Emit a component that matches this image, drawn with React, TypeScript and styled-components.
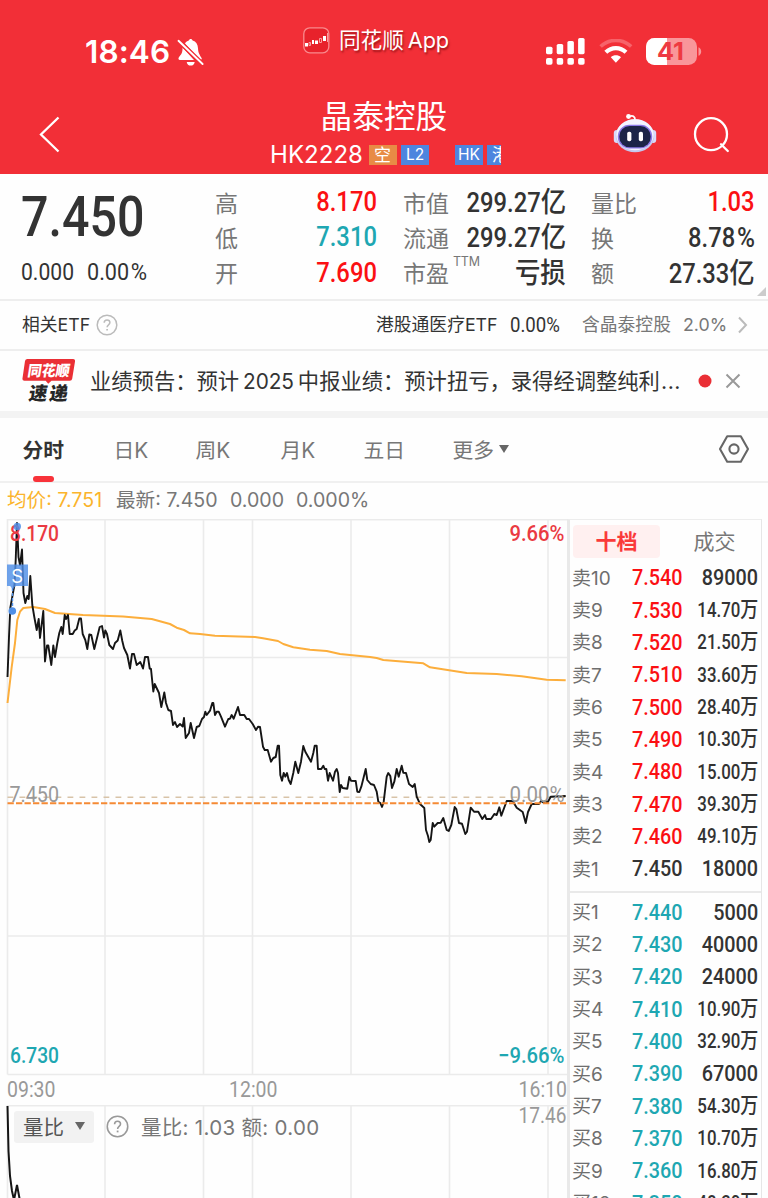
import React from 'react';
import styled, { createGlobalStyle } from 'styled-components';

const LATIN = `Inter, "Noto Sans CJK SC", sans-serif`;
const DIGITS = `Roboto, "Noto Sans CJK SC", sans-serif`;

const RED = '#f22f37';
const UP = '#fb1013';
const DOWN = '#1ea7b2';
const INK = '#333333';
const GREY = '#777777';
const LINE = '#ededed';

const GlobalStyle = createGlobalStyle`
  * { box-sizing: border-box; }
  body { margin: 0; background: #fff; font-family: ${LATIN}; color: ${INK}; }
`;

const Screen = styled.div`
  width: 768px;
  height: 1198px;
  overflow: hidden;
  display: flex;
  flex-direction: column;
  background: #fefefe;
  white-space: nowrap;
`;

/* Condensed figures used for every price and amount. */
const Num = styled.span<{ $size: number; $color?: string; $weight?: number; $from?: string; $scale?: number }>`
  display: inline-block;
  font-family: ${DIGITS};
  font-size: ${p => p.$size}px;
  font-weight: ${p => p.$weight ?? 500};
  color: ${p => p.$color ?? INK};
  line-height: 1;
  transform: scaleX(${p => p.$scale ?? 0.88});
  transform-origin: ${p => p.$from ?? 'right'} center;
`;

const Unit = styled.span`
  font-size: 1.07em;
  font-weight: 500;
`;

const Percent = styled.span`
  font-size: 1.03em;
  margin-left: 0.07em;
`;

/* ---------- header ---------- */

const Header = styled.header`
  height: 174px;
  flex: none;
  background: ${RED};
  color: #fff;
`;

const StatusBar = styled.div`
  height: 88px;
  display: grid;
  grid-template-columns: 303px 243px 53px 47px 1fr;
  align-items: start;
`;

const Clock = styled.div`
  padding: 35px 0 0 85px;
  display: flex;
  align-items: center;
  gap: 7px;
  font-size: 31.5px;
  font-weight: 600;
  line-height: 34px;
  letter-spacing: 0.1px;
`;

const AppChip = styled.div`
  padding-top: 26px;
  display: flex;
  align-items: center;
  gap: 9px;
  font-size: 21.7px;
  line-height: 28px;
  letter-spacing: -0.1px;
  word-spacing: -2px;
  text-shadow: 1px 2px 2px rgba(90, 0, 0, 0.55);
  svg { flex: none; }
`;

const StatusIcon = styled.div<{ $top: number }>`
  padding-top: ${p => p.$top}px;
  svg { display: block; }
`;

const NavBar = styled.div`
  height: 86px;
  display: grid;
  grid-template-columns: 270px 343px 80px 1fr;
`;

const BackButton = styled.div`
  padding: 28px 0 0 38px;
`;

const TitleBlock = styled.div`
  display: flex;
  flex-direction: column;
`;

const StockName = styled.div`
  margin: 11.5px 0 0 50.5px;
  font-size: 31.7px;
  line-height: 34px;
`;

const CodeLine = styled.div`
  margin-top: 11.500px;
  display: flex;
  align-items: center;
  font-size: 24px;
  line-height: 20px;
  height: 20px;
`;

const Code = styled.span`
  width: 99px;
  letter-spacing: 0.05px;
`;

const Tag = styled.span<{ $bg: string; $w: number; $mr?: number }>`
  width: ${p => p.$w}px;
  height: 20px;
  margin-right: ${p => p.$mr ?? 4}px;
  padding-left: 5px;
  overflow: hidden;
  background: ${p => p.$bg};
  font-size: 17px;
  line-height: 20px;
`;

const LatinTag = styled(Tag)`
  padding-left: 0;
  text-align: center;
  font-size: 15.5px;
`;

/* ---------- quote ---------- */

const Quote = styled.section`
  position: relative;
  height: 127px;
  flex: none;
  padding: 11px 13px 0 0;
  display: grid;
  grid-template-columns: 189px 162px 163px 164px;
  column-gap: 26px;
  border-bottom: 2px solid #eeeeee;
  & > :nth-child(4) { margin-left: -1px; margin-right: 1px; }
`;

const Last = styled.div`
  padding: 5px 0 0 21px;
  display: flex;
  flex-direction: column;
`;

const Change = styled.div`
  margin-top: 14.5px;
  display: grid;
  grid-template-columns: 66px 1fr;
`;

const Pair = styled.div`
  height: 35.3px;
  display: flex;
  align-items: center;
  justify-content: space-between;
`;

const PairLabel = styled.span`
  position: relative;
  padding-top: 2px;
  font-size: 23px;
  line-height: 34px;
  color: ${GREY};
`;

const Superscript = styled.sup`
  position: absolute;
  left: 50px;
  top: 0;
  font-size: 12.5px;
  line-height: 14px;
  letter-spacing: -0.2px;
`;

const Corner = styled.i`
  position: absolute;
  right: 2px;
  bottom: 3px;
  border-left: 9px solid transparent;
  border-bottom: 9px solid #cccccc;
`;

/* ---------- ETF + news ---------- */

const EtfRow = styled.section`
  height: 50px;
  flex: none;
  padding-left: 22px;
  display: grid;
  grid-template-columns: 74px 280px 134px 72px 101px 54px 1fr;
  align-items: center;
  font-size: 17.8px;
  line-height: 48px;
  border-bottom: 2px solid #eeeeee;
  svg { display: block; }
`;

const Muted = styled.span`
  color: ${GREY};
`;

const NewsRow = styled.section`
  height: 67px;
  flex: none;
  padding-left: 22px;
  display: grid;
  grid-template-columns: 68px 608px 27px 1fr;
  align-items: center;
  border-bottom: 7px solid #f3f3f3;
  svg { display: block; }
`;

const Headline = styled.span`
  font-size: 21.3px;
  line-height: 30px;
`;

const Year = styled.span`
  margin: 0 4px 0 4px;
  font-size: 20.8px;
  letter-spacing: -0.1px;
`;

const Ellipsis = styled.span`
  margin-left: 1px;
  letter-spacing: 0.6px;
`;

/* ---------- tabs ---------- */

const Tabs = styled.nav`
  height: 65px;
  flex: none;
  padding-left: 22.5px;
  display: grid;
  grid-template-columns: 91px 82px 85px 83px 89px 265px 1fr;
  border-bottom: 2px solid #f0f0f0;
`;

const Tab = styled.span<{ $active?: boolean }>`
  position: relative;
  display: flex;
  align-items: center;
  height: 64px;
  padding-bottom: 1.500px;
  font-size: 20.8px;
  font-weight: ${p => (p.$active ? 700 : 400)};
  color: ${p => (p.$active ? INK : GREY)};
  &::after {
    content: '';
    display: ${p => (p.$active ? 'block' : 'none')};
    position: absolute;
    left: 10px;
    bottom: 0;
    width: 21px;
    height: 6px;
    border-radius: 3px;
    background: #f8333a;
  }
`;

const Caret = styled.i<{ $ml: number }>`
  margin-left: ${p => p.$ml}px;
  border: 5.5px solid transparent;
  border-top: 8px solid #666;
  border-bottom: 0;
`;

const Legend = styled.div`
  height: 36px;
  flex: none;
  padding: 0 0 1px 7px;
  display: grid;
  grid-template-columns: 109px 114px 66px 1fr;
  align-items: center;
  font-size: 19.6px;
  line-height: 35px;
  color: ${GREY};
`;

const Average = styled.span`
  color: #fbb42c;
`;

/* ---------- body ---------- */

const Body = styled.main`
  flex: 1;
  display: grid;
  grid-template-columns: 567px 195px;
  min-height: 0;
`;

const ChartColumn = styled.div`
  display: flex;
  flex-direction: column;
  svg { display: block; flex: none; }
`;

const Indicator = styled.div`
  position: relative;
  height: 94px;
  flex: none;
`;

const IndicatorBar = styled.div`
  position: absolute;
  left: 14px;
  top: 5px;
  height: 33px;
  display: flex;
  align-items: center;
  font-size: 20.5px;
  color: ${GREY};
`;

const IndicatorPick = styled.div`
  width: 80px;
  height: 32px;
  margin-right: 11.5px;
  padding: 0 0 1px 9px;
  display: flex;
  align-items: center;
  border-radius: 3px;
  background: #f2f2f2;
  color: #555;
`;

const IndicatorText = styled.span`
  margin-left: 12.5px;
  padding-bottom: 2px;
  letter-spacing: 0.3px;
`;

const Book = styled.aside`
  height: 720px;
  overflow: hidden;
  border-left: 3px solid #e9e9e9;
  border-right: 1px solid #e6e6e6;
  border-top: 1px solid ${LINE};
`;

const BookTabs = styled.div`
  height: 41.5px;
  padding: 5px 0 0 3px;
  display: grid;
  grid-template-columns: 87px 109px;
`;

const BookTab = styled.span<{ $active?: boolean }>`
  height: 33px;
  padding-bottom: 3px;
  display: flex;
  align-items: center;
  justify-content: center;
  border-radius: 4px;
  font-size: 21px;
  font-weight: ${p => (p.$active ? 700 : 400)};
  color: ${p => (p.$active ? '#fa3a3a' : GREY)};
  background: ${p => (p.$active ? '#fff0f0' : 'transparent')};
`;

const Level = styled.div`
  height: 32.33px;
  padding: 0 3px 0 2px;
  display: grid;
  grid-template-columns: 40px 70px 1fr;
  align-items: center;
  justify-items: end;
`;

const LevelName = styled.span`
  justify-self: start;
  padding-top: 2px;
  font-size: 19px;
  line-height: 30px;
  color: #6e6e6e;
`;

const BookDivider = styled.div`
  height: 2px;
  margin: 6px 0 3px;
  background: #e9e9e9;
`;

/* ---------- icons ---------- */

const BellOff = () => (
  <svg width="27" height="29" viewBox="0 0 27 29" fill="#fff">
    <path d="M8 5.500C9 4 10.400 3 11.800 2.600c.3-1 1-1.600 1.900-1.600s1.600.6 1.900 1.600c3.500 1 5.200 4 5.400 7.600.2 3.600.6 5 3.600 9.800.4.800 0 1.900-1.200 1.900z" />
    <path d="M5.600 9.600 17 21.900H3c-1.600 0-2-1.600-1.100-2.700 2.700-3 3.500-4 3.700-9.600z" />
    <path d="M9.700 23.900h8c-.3 2.400-1.900 3.600-4 3.600s-3.700-1.200-4-3.600z" />
    <path d="M1.500 2.800 25.600 26" stroke={RED} strokeWidth="4.600" />
    <path d="M1.500 2.800 25.600 26" stroke="#fff" strokeWidth="1.900" strokeLinecap="round" />
  </svg>
);

const AppIcon = () => (
  <svg width="27" height="27" viewBox="0 0 27 27">
    <rect x=".8" y=".8" width="25" height="25" rx="6" fill="#e8222b" stroke="#f98a8d" strokeWidth="1.300" />
    <g fill="#fff">
      <rect x="2" y="16" width="3" height="3.500" />
      <rect x="9" y="13" width="2" height="4" />
      <rect x="12" y="13.500" width="3" height="3.500" />
      <rect x="20" y="9" width="3" height="5" />
    </g>
    <path d="M6 15.500h1.500v3H6zM16.500 11.500h2v4h-2zM24.500 6v9" fill="none" stroke="#fbb" strokeWidth=".8" />
  </svg>
);

const Signal = () => (
  <svg width="40" height="28" viewBox="0 0 40 28" fill="#fff">
    {[0, 1, 2, 3].map(i => (
      <g key={i}>
        <rect x={i * 10.700} y={[8.700, 6, 3, 0][i]} width="6.500" height={[7.500, 10.200, 13.200, 16.200][i]} rx="1.600" />
        <rect x={i * 10.700} y="20" width="6.500" height="6.700" rx="1.800" />
      </g>
    ))}
  </svg>
);

const Wifi = () => (
  <svg width="34" height="25" viewBox="0 0 34 25" fill="none">
    <path d="M1.600 7.500C10-.6 23.600-.6 32.200 7.500" stroke="#f7636a" strokeWidth="3.600" />
    <path d="M6.800 13.300c5.800-5.500 14.400-5.500 20.200 0" stroke="#fff" strokeWidth="4.200" />
    <path d="M11.800 18.300c2.900-2.600 7.300-2.600 10.200 0l-5.100 5.500z" fill="#fff" />
  </svg>
);

const Battery = () => (
  <svg width="57" height="28" viewBox="0 0 57 28">
    <clipPath id="cell"><rect x="0" y="0" width="51" height="27" rx="8.500" /></clipPath>
    <g clipPath="url(#cell)">
      <rect width="51" height="27" fill="#f9969a" />
      <rect width="21" height="27" fill="#fff" />
    </g>
    <path d="M52.500 9.200c3.600 1.400 3.600 7.200 0 8.600z" fill="#f9969a" />
    <text x="11" y="22.300" fontFamily="Inter" fontSize="24" fontWeight="700" fill="#ee3a41" textLength="27" lengthAdjust="spacingAndGlyphs">41</text>
  </svg>
);

const Robot = () => (
  <svg width="44" height="42" viewBox="0 0 44 42">
    <path d="M16.500 3.500c3-1.500 5.500-.5 5.700 4" fill="none" stroke="#fff" strokeWidth="1.800" />
    <circle cx="15.500" cy="3.500" r="2.400" fill="#fff" />
    <rect x=".8" y="17" width="6" height="13" rx="3" fill="#d9dbfb" />
    <rect x="37.200" y="17" width="6" height="13" rx="3" fill="#d9dbfb" />
    <ellipse cx="22" cy="23" rx="19.300" ry="16.300" fill="#c4c7ee" />
    <ellipse cx="22" cy="21.700" rx="18.700" ry="15.600" fill="#f4f4ff" />
    <rect x="4.800" y="11.800" width="34.400" height="23.600" rx="11.500" fill="#8b78e6" />
    <rect x="6.300" y="13" width="31.400" height="21.200" rx="10.300" fill="#1c2447" />
    <rect x="14.200" y="18.800" width="4.200" height="9.400" rx="1.800" fill="#fff" />
    <rect x="25.800" y="18.800" width="4.200" height="9.400" rx="1.800" fill="#fff" />
  </svg>
);

const Search = () => (
  <svg width="38" height="38" viewBox="0 0 38 38" fill="none" stroke="#fff" strokeWidth="2.300">
    <circle cx="18" cy="18.200" r="16" />
    <path d="m28 28.200 6.800 6.800" strokeLinecap="round" />
  </svg>
);

const Help = ({ size, color }: { size: number; color: string }) => (
  <svg width={size} height={size} viewBox="0 0 22 22" fill="none" stroke={color} strokeWidth="1.500">
    <circle cx="11" cy="11" r="9.800" />
    <path d="M8.200 8.800c0-3.900 5.700-3.700 5.700-.2 0 2.300-2.800 2.300-2.800 4.700" />
    <path d="M11.100 14.900v1.700" strokeWidth="1.700" />
  </svg>
);

const NewsLogo = () => (
  <svg width="54" height="46" viewBox="0 0 54 46" fontFamily={`"Noto Sans CJK SC", sans-serif`} fontWeight="900">
    <path d="M5.500 1h45.500a2 2 0 0 1 2 2.400l-2.800 17.300a2.500 2.500 0 0 1-2.500 2H29.500l-3.300 3-2.500-3H2.500a2 2 0 0 1-2-2.400L3 3a2.500 2.500 0 0 1 2.500-2z" fill="#ea2f35" />
    <text transform="translate(5 18) skewX(-9)" fontSize="14.800" fill="#fff" textLength="42" lengthAdjust="spacingAndGlyphs">同花顺</text>
    <text transform="translate(6 42) skewX(-9)" fontSize="18.500" fill="#262626" textLength="39">速递</text>
  </svg>
);

const Hexagon = () => (
  <svg width="32" height="30" viewBox="0 0 32 30" fill="none" stroke="#666" strokeWidth="2.100" strokeLinejoin="round">
    <path d="M9.200 2.200h13.600L30 15l-7.200 12.800H9.200L2 15z" />
    <circle cx="16" cy="15" r="4.600" />
  </svg>
);

/* ---------- chart data ---------- */

const PRICE = `7.5,677 9,637 10.3,608 13.5,590 14.5,585 15.7,560 17,523 18.5,557 20,565 22,549.5 23.5,593 25.3,603
27.3,596 28.7,599 30.3,576 32.3,605 34.3,617 36.7,630 38.7,619 40,638 43.3,611 45,661.5 47,645.5 48.3,645.5 51.3,665
53.3,645.5 55,657 57.3,643 59.3,633 61.3,627 62.7,634 64.7,615 66,619 68,615 69.7,634 72.7,634 74.7,630.5 76.7,629
79.3,618.5 81,618.5 82.7,634 85.3,640 87.3,649 89.3,634.5 91.3,635 94.3,649 97,638 99.7,627 102,626 104,637.5
105.3,630.5 107,634 109.3,645 113,649 115,643 117.7,640.5 120.3,630.5 122.3,641 124,648 127.3,655 130,668.5 132,654
134,654 136.7,665 140.3,662 143,668.5 145,657 148,657 149.7,668.5 151,669 153.3,691.5 154.7,684 159,693 161.3,707
164.3,692.5 166,703 168.3,710 171,711 173,725 175,722 177,727 180,724 182.7,726.5 184,718 185.7,738 189,733
190.7,723 194,738 196.7,727 199.3,726 202,719 204,717 205.3,711.7 206.7,715 210,710.7 212.3,703 213.3,703 215,715
216.7,711.7 218.7,711.7 221,716.7 225,726.7 228.3,719 230,718.7 231.7,715 233.7,718.7 238,707 240,715 244.3,715
246.7,719 249,719 252.7,724 256,730 258,726.7 260,727 263,746.7 264.7,750 267.7,750 271,761.7 273.3,758 275.7,757
277.7,745.7 279,745.7 280.3,775 282,780.7 283.7,773 285.3,776.7 287,773 288.7,780 290.7,784 293.3,773 295.3,761.7
298.3,773 301,761.7 303.3,746 305.3,751.7 311,761.7 313.3,753 314.7,745.7 316.7,745.7 318,769 321.3,769 323.3,765.7
324.7,769 326.3,769 328,780.7 329.7,773 333,780.7 335,771.7 336.7,769 338,773 339.7,792 341,785 342.7,788
347.3,788.7 349.3,777 351,780.7 355.7,781 357.3,791.7 359.3,792 361.3,786.7 363,780 365.7,769 367.3,780 370.7,784
374,785 376.7,791.7 378.3,801.7 380.3,803 382,807 383.7,801.7 386.7,776.7 388.3,773 390.3,776 392,788 394.3,781.7
396.7,769 398.7,776.7 401.7,765.7 403.3,772.7 406,773 409,784 412.7,787 414.7,784 416.7,796.7 420,804 424.3,808
426,830 428,836 429.3,842 430.7,840 432.7,823 434.3,826.7 437.7,823 440.7,822.7 443.3,818 446.7,830 448.7,831
451.3,825 454.7,807 456.3,809 459,823 462,823.7 465.3,834 467,831.7 470.7,807.7 474,811.7 478.3,811.7 482.3,819
485,815 486.3,819 491,819 494.3,814 496.7,815 499.3,807.3 501.3,815.7 506.7,801 512.7,801 516.7,807.7 522.7,812
525.7,823 528,812 531.7,804 539,804 541.3,800.7 543,802.3 546.3,801 547.3,803 550.7,796.7 565.7,796`;

const AVERAGE = `7.5,703 11.7,667 15,643 17.3,620 20,611.7 23.3,608 33.3,607 45,609 55,613 83,615 123,616.5 151.7,619
170,624 176.7,627.7 184,630 190,633.3 200,634 215,635.7 255,637 263,638.3 278,641 283.3,644 293.3,647.3 310,649.7
326.7,651 340,654 370,657 376.7,658 383.3,660 423.3,663.3 430,667.3 466.7,673 496.7,674 521.7,676.3 546.7,679.7
565.7,680.3`;

const COLUMNS = [105, 203.5, 252.5, 351, 449.5, 548];

interface AxisTextProps { x: number; y: number; w: number; fill?: string; weight?: number; children: string }

const AxisText = ({ x, y, w, fill = '#999', weight = 400, children }: AxisTextProps) => (
  <text x={x} y={y} fill={fill} fontFamily="Roboto" fontSize="22" fontWeight={weight} textLength={w} lengthAdjust="spacingAndGlyphs">
    {children}
  </text>
);

const PriceChart = () => (
  <svg width="567" height="586" viewBox="0 519 567 586" fill="none">
    <g stroke="#ebebeb" strokeWidth="1.600">
      <path d="M7.500 519.700H567M7.500 657.500H567M7.500 936H567M7.500 1074.500H567M7.500 519V1074.500" />
      {COLUMNS.map(x => <path key={x} d={`M${x} 519V1074.500`} />)}
    </g>
    <path d="M7.500 797.200H566" stroke="#d8c3a8" strokeWidth="1.500" strokeDasharray="5.800 6.200" />
    <polyline points={AVERAGE} stroke="#fcae3c" strokeWidth="2" strokeLinejoin="round" />
    <polyline points={PRICE} stroke="#151515" strokeWidth="1.900" strokeLinejoin="round" />
    <path d="M7.500 803.300H566" stroke="#f58a35" strokeWidth="2" strokeDasharray="6.300 2.200" />
    <AxisText x={10} y={540.5} w={49} fill="#ea3a42" weight={500}>8.170</AxisText>
    <AxisText x={509.5} y={540.5} w={55} fill="#ea3a42" weight={500}>9.66%</AxisText>
    <AxisText x={10} y={1062.500} w={49} fill={DOWN} weight={500}>6.730</AxisText>
    <AxisText x={498} y={1062.500} w={66.5} fill={DOWN} weight={500}>−9.66%</AxisText>
    <AxisText x={9.5} y={801.5} w={49.5}>7.450</AxisText>
    <AxisText x={509.5} y={801.5} w={55}>0.00%</AxisText>
    <AxisText x={7} y={1096.5} w={48.5}>09:30</AxisText>
    <AxisText x={229} y={1096.5} w={48.5}>12:00</AxisText>
    <AxisText x={518.5} y={1096.5} w={48.5}>16:10</AxisText>
    <g fill="#4f8fe6">
      <circle cx="17.300" cy="526.500" r="3.700" fillOpacity=".85" />
      <circle cx="12.300" cy="611" r="3.800" />
      <path d="M12.500 588V610" stroke="#4f8fe6" strokeWidth="1.400" strokeDasharray="3 2" />
      <path d="M7 564.500h21v21.500H15.500l-2.700 3.500-2.600-3.500H7z" fillOpacity=".82" />
      <text x="11.200" y="582.500" fontFamily="Inter" fontSize="18.500" fill="#fff">S</text>
    </g>
  </svg>
);

const IndicatorChart = () => (
  <svg width="567" height="94" viewBox="0 1104 567 94" fill="none">
    <g stroke="#ebebeb" strokeWidth="1.600">
      <path d="M7.500 1104.800H567M7.500 1104V1198" />
      {COLUMNS.map(x => <path key={x} d={`M${x} 1104V1198`} />)}
    </g>
    <polyline points="7.5,1105 8.5,1150 10,1175 12,1190 14,1199 17,1184 20,1200" stroke="#151515" strokeWidth="2" />
    <AxisText x={518.5} y={1122} w={48}>17.46</AxisText>
  </svg>
);

/* ---------- data ---------- */

const SELLS = [
  ['卖10', '7.540', '89000'], ['卖9', '7.530', '14.70万'], ['卖8', '7.520', '21.50万'], ['卖7', '7.510', '33.60万'],
  ['卖6', '7.500', '28.40万'], ['卖5', '7.490', '10.30万'], ['卖4', '7.480', '15.00万'], ['卖3', '7.470', '39.30万'],
  ['卖2', '7.460', '49.10万'], ['卖1', '7.450', '18000'],
];
const BUYS = [
  ['买1', '7.440', '5000'], ['买2', '7.430', '40000'], ['买3', '7.420', '24000'], ['买4', '7.410', '10.90万'],
  ['买5', '7.400', '32.90万'], ['买6', '7.390', '67000'], ['买7', '7.380', '54.30万'], ['买8', '7.370', '10.70万'],
  ['买9', '7.360', '16.80万'], ['买10', '7.350', '48.20万'],
];

const BookLevel = ({ row, color }: { row: string[]; color: string }) => {
  const [name, price, amount] = row;
  const short = amount.endsWith('万');
  return (
    <Level>
      <LevelName>{name}</LevelName>
      <Num $size={22.5} $color={price === '7.450' ? INK : color}>{price}</Num>
      <Num $size={short ? 19.7 : 22.5} $scale={short ? 0.855 : 0.88}>
        {short ? <>{amount.slice(0, -1)}<Unit>万</Unit></> : amount}
      </Num>
    </Level>
  );
};

interface StatProps { label: string; value: string; unit?: string; percent?: boolean; color?: string; note?: string }

const Stat = ({ label, value, unit, percent, color, note }: StatProps) => (
  <Pair>
    <PairLabel>{label}{note && <Superscript>{note}</Superscript>}</PairLabel>
    <Num $size={27} $color={color}>
      {value}
      {unit && <Unit>{unit}</Unit>}
      {percent && <Percent>%</Percent>}
    </Num>
  </Pair>
);

export default function App() {
  return (
    <Screen>
      <GlobalStyle />
      <Header>
        <StatusBar>
          <Clock>18:46<BellOff /></Clock>
          <AppChip><AppIcon />同花顺 App</AppChip>
          <StatusIcon $top={38}><Signal /></StatusIcon>
          <StatusIcon $top={39}><Wifi /></StatusIcon>
          <StatusIcon $top={38}><Battery /></StatusIcon>
        </StatusBar>
        <NavBar>
          <BackButton>
            <svg width="24" height="38" viewBox="0 0 24 38" fill="none" stroke="#fff" strokeWidth="2.300">
              <path d="M20.500 1.500 3 18.500l17.500 17" />
            </svg>
          </BackButton>
          <TitleBlock>
            <StockName>晶泰控股</StockName>
            <CodeLine>
              <Code>HK2228</Code>
              <Tag $bg="#e88b45" $w={28}>空</Tag>
              <LatinTag $bg="#4d85de" $w={28} $mr={26}>L2</LatinTag>
              <LatinTag $bg="#4d85de" $w={28} $mr={4}>HK</LatinTag>
              <Tag $bg="#4d85de" $w={14}>港</Tag>
            </CodeLine>
          </TitleBlock>
          <StatusIcon $top={25}><Robot /></StatusIcon>
          <StatusIcon $top={28}><Search /></StatusIcon>
        </NavBar>
      </Header>

      <Quote>
        <Last>
          <Num $size={55} $from="left">7.450</Num>
          <Change>
            <Num $size={24} $from="left" $weight={400}>0.000</Num>
            <Num $size={24} $from="left" $weight={400} $scale={0.9}>0.00<Percent>%</Percent></Num>
          </Change>
        </Last>
        <div>
          <Stat label="高" value="8.170" color={UP} />
          <Stat label="低" value="7.310" color={DOWN} />
          <Stat label="开" value="7.690" color={UP} />
        </div>
        <div>
          <Stat label="市值" value="299.27" unit="亿" />
          <Stat label="流通" value="299.27" unit="亿" />
          <Stat label="市盈" value="" unit="亏损" note="TTM" />
        </div>
        <div>
          <Stat label="量比" value="1.03" color={UP} />
          <Stat label="换" value="8.78" percent />
          <Stat label="额" value="27.33" unit="亿" />
        </div>
        <Corner />
      </Quote>

      <EtfRow>
        <span>相关ETF</span>
        <Help size={22} color="#bbbbbb" />
        <span>港股通医疗ETF</span>
        <Num $size={20} $weight={400} $from="left" $scale={0.93}>0.00%</Num>
        <Muted>含晶泰控股</Muted>
        <Muted>2.0%</Muted>
        <svg width="12" height="18" viewBox="0 0 12 18" fill="none" stroke="#bbb" strokeWidth="2">
          <path d="m2 1.500 7 7.500-7 7.500" />
        </svg>
      </EtfRow>

      <NewsRow>
        <NewsLogo />
        <Headline>业绩预告：预计<Year>2025</Year>中报业绩：预计扭亏，录得经调整纯利<Ellipsis>...</Ellipsis></Headline>
        <svg width="14" height="14" viewBox="0 0 14 14"><circle cx="7" cy="7" r="6.500" fill="#ea2f35" /></svg>
        <svg width="16" height="16" viewBox="0 0 16 16" fill="none" stroke="#999" strokeWidth="2">
          <path d="m1.500 1.500 13 13m0-13-13 13" />
        </svg>
      </NewsRow>

      <Tabs>
        <Tab $active>分时</Tab>
        <Tab>日K</Tab>
        <Tab>周K</Tab>
        <Tab>月K</Tab>
        <Tab>五日</Tab>
        <Tab>更多<Caret $ml={5} /></Tab>
        <Tab><Hexagon /></Tab>
      </Tabs>

      <Legend>
        <Average>均价: 7.751</Average>
        <span>最新: 7.450</span>
        <span>0.000</span>
        <span>0.000%</span>
      </Legend>

      <Body>
        <ChartColumn>
          <PriceChart />
          <Indicator>
            <IndicatorChart />
            <IndicatorBar>
              <IndicatorPick>量比<Caret $ml={11} /></IndicatorPick>
              <Help size={23} color="#999999" />
              <IndicatorText>量比: 1.03 额: 0.00</IndicatorText>
            </IndicatorBar>
          </Indicator>
        </ChartColumn>
        <Book>
          <BookTabs>
            <BookTab $active>十档</BookTab>
            <BookTab>成交</BookTab>
          </BookTabs>
          {SELLS.map(row => <BookLevel key={row[0]} row={row} color={UP} />)}
          <BookDivider />
          {BUYS.map(row => <BookLevel key={row[0]} row={row} color={DOWN} />)}
        </Book>
      </Body>
    </Screen>
  );
}
